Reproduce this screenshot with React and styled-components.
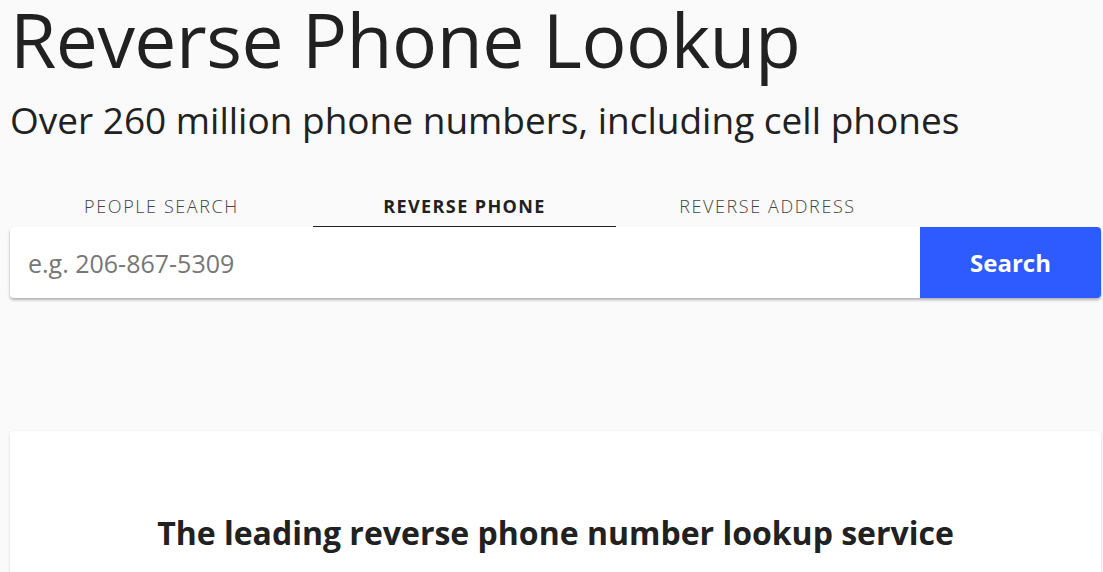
import React, { useState } from 'react';
import styled, { createGlobalStyle } from 'styled-components';

const GlobalStyle = createGlobalStyle`
  html, body {
    margin: 0;
    padding: 0;
    background: #fafafa;
    font-family: 'Open Sans', 'Noto Sans', sans-serif;
    color: #212121;
    overflow: hidden;
  }
`;

const Page = styled.div`
  padding: 0 2px 0 10px;
  width: 1091px;
`;

const Title = styled.h1`
  margin: 0;
  font-size: 75px;
  font-weight: 400;
  line-height: 78px;
  letter-spacing: -0.5px;
  white-space: nowrap;
`;

const Subtitle = styled.h2`
  margin: 17px 0 0;
  font-size: 37px;
  font-weight: 400;
  line-height: 50px;
  white-space: nowrap;
`;

const SearchArea = styled.div`
  margin-top: 37px;
`;

const Tabs = styled.div`
  display: flex;
  width: 909px;
`;

const Tab = styled.button`
  flex: 1;
  border: none;
  background: none;
  padding: 12px 0 8px;
  font-family: inherit;
  font-size: 18px;
  line-height: 24px;
  letter-spacing: ${p => (p.$active ? '1.4px' : '1.6px')};
  text-transform: uppercase;
  font-weight: ${p => (p.$active ? 700 : 300)};
  color: ${p => (p.$active ? '#212121' : '#444')};
  border-bottom: 1px solid ${p => (p.$active ? '#212121' : 'transparent')};
  cursor: pointer;
`;

const SearchRow = styled.form`
  display: flex;
  height: 71px;
  border-radius: 4px;
  box-shadow: 0 2px 3px rgba(0, 0, 0, 0.3);
  background: #fff;
`;

const Input = styled.input`
  flex: 1;
  border: none;
  outline: none;
  background: transparent;
  padding: 0 18px;
  font-family: inherit;
  font-size: 25px;
  color: #212121;
  border-radius: 4px 0 0 4px;

  &::placeholder {
    color: #777;
  }
`;

const SearchButton = styled.button`
  width: 181px;
  border: none;
  background: #2e5bff;
  color: #fff;
  font-family: inherit;
  font-size: 24px;
  font-weight: 700;
  border-radius: 0 4px 4px 0;
  cursor: pointer;
`;

const Card = styled.section`
  margin-top: 133px;
  background: #fff;
  border-radius: 4px;
  box-shadow: 0 1px 3px rgba(0, 0, 0, 0.15);
  padding: 80px 20px 40px;
  text-align: center;
`;

const CardHeading = styled.h3`
  margin: 0;
  font-size: 32px;
  line-height: 44px;
  font-weight: 700;
`;

const tabs = ['People Search', 'Reverse Phone', 'Reverse Address'];

export default function App() {
  const [active, setActive] = useState(1);
  return (
    <>
      <GlobalStyle />
      <Page>
        <Title>Reverse Phone Lookup</Title>
        <Subtitle>Over 260 million phone numbers, including cell phones</Subtitle>
        <SearchArea>
          <Tabs>
            {tabs.map((t, i) => (
              <Tab key={t} $active={i === active} onClick={() => setActive(i)}>
                {t}
              </Tab>
            ))}
          </Tabs>
          <SearchRow onSubmit={e => e.preventDefault()}>
            <Input placeholder="e.g. 206-867-5309" />
            <SearchButton type="submit">Search</SearchButton>
          </SearchRow>
        </SearchArea>
        <Card>
          <CardHeading>The leading reverse phone number lookup service</CardHeading>
        </Card>
      </Page>
    </>
  );
}
